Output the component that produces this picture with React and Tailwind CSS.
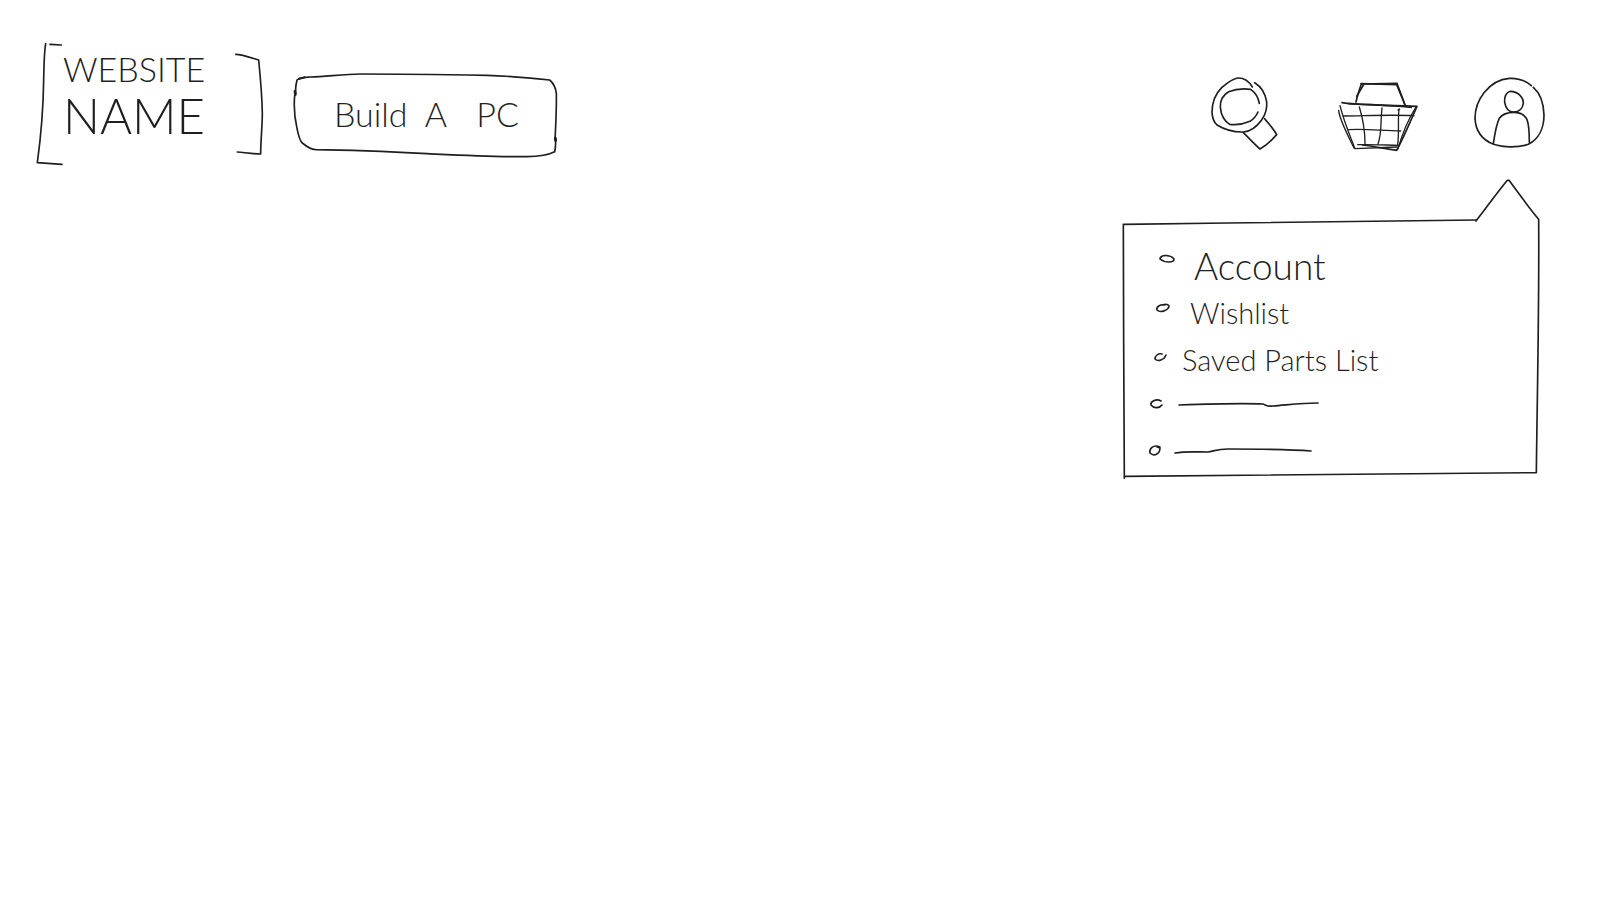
import React from "react";

const INK = "#1f1f1f";

function Sketch({ viewBox, className, stretch = false, children }) {
  return (
    <svg
      viewBox={viewBox}
      className={className}
      preserveAspectRatio={stretch ? "none" : "xMidYMid meet"}
      fill="none"
      stroke={INK}
      strokeWidth="5"
      strokeLinecap="round"
      strokeLinejoin="round"
      aria-hidden="true"
    >
      {children}
    </svg>
  );
}

function Logo() {
  return (
    <a href="#home" className="relative flex h-[125px] w-[230px] shrink-0 flex-col pt-2 pl-7">
      <Sketch viewBox="45 36 690 375" className="absolute inset-0 h-full w-full" stretch>
        <path d="M77 41 C72 70 72 110 71 150 C70 230 64 310 52 398 L126 403 M90 43 L124 45" />
        <path d="M647 73 C665 73 690 82 716 90 C720 130 726 190 727 250 C727 290 722 330 722 372 C700 372 675 368 652 366" />
      </Sketch>
      <span className="text-[34px] leading-[38px]">WEBSITE</span>
      <span className="text-[49px] leading-[54px]">NAME</span>
    </a>
  );
}

function BuildButton() {
  return (
    <button type="button" className="relative mt-[30px] h-[87px] w-[267px] shrink-0 cursor-pointer pb-1 text-[34px]">
      <Sketch viewBox="38 36 801 261" className="absolute inset-0 h-full w-full" stretch>
        <path d="M46 102 C45 88 47 72 50 60 C58 52 75 52 90 51 C140 49 190 43 240 42 C370 42 500 44 620 46 C690 48 750 54 808 60 C820 70 826 84 828 100 C829 150 826 200 824 240" />
        <path d="M44 98 C40 130 42 170 50 205 C54 225 58 242 66 249 C78 259 92 268 106 269 C210 270 330 275 440 281 C550 286 650 291 740 290 C775 289 805 284 823 275 C826 265 826 250 826 235" />
        <path d="M44 94 L45 104 M825 234 L826 242" strokeWidth="8" />
        <path d="M56 56 L74 52" strokeWidth="6" />
      </Sketch>
      <span>Build</span> <span className="mr-5 ml-2">A</span> <span>PC</span>
    </button>
  );
}

function SearchIcon() {
  return (
    <Sketch viewBox="34 27 210 228" className="h-[76px] w-[70px]">
      <path d="M158 66 C148 49 133 38 114 39 C100 41 82 54 66 68 C48 86 37 112 37 142 C38 158 43 172 52 180 C75 194 105 202 132 201 C152 199 172 184 186 165 C198 148 203 130 201 110 C197 86 183 64 165 53" />
      <path d="M179 115 C176 98 166 82 153 73 C130 70 105 73 87 80 C70 90 61 108 62 127 C64 149 74 168 90 178 C112 181 135 176 151 169 C163 162 170 152 175 141" />
      <path d="M131 203 C147 218 164 238 181 252 C199 242 217 225 231 209 C221 191 208 177 195 161" />
    </Sketch>
  );
}

function BasketIcon() {
  return (
    <Sketch viewBox="29 13 249 240" className="h-[80px] w-[83px]">
      <path d="M92 97 C96 78 102 60 108 43 L215 41 C222 62 233 86 240 110" />
      <path d="M94 80 L116 43 M107 42 L214 45 L239 106" />
      <path d="M50 99 C75 104 105 103 135 105 C170 107 210 108 258 113" />
      <path d="M70 102 C130 106 200 108 275 110 C255 155 237 200 214 242 C180 238 150 230 112 226" />
      <path d="M44 108 C52 140 66 180 89 237 L215 232" strokeWidth="4" />
      <path d="M40 122 C42 148 62 186 86 235" strokeWidth="4" />
      <path d="M272 112 C250 146 232 188 217 240" strokeWidth="4" />
      <path d="M54 139 C110 139 190 134 266 138 M70 180 C110 176 170 183 226 184" strokeWidth="4" />
      <path d="M102 112 C112 145 119 185 119 222 M170 115 C165 160 170 190 158 223 M221 118 C217 150 222 190 217 224" strokeWidth="4" />
      <path d="M97 225 C135 224 175 226 222 227 M218 121 L223 119" strokeWidth="4" />
    </Sketch>
  );
}

function UserIcon() {
  return (
    <Sketch viewBox="36 27 225 225" className="h-[75px] w-[75px]">
      <path d="M214 62 C197 47 173 39 148 40 C118 42 92 58 72 83 C54 106 45 132 45 160 C47 198 68 225 101 238 C130 248 175 248 205 238 C237 222 252 188 252 150 C251 116 240 84 220 67" />
      <path d="M150 79 C138 83 132 97 134 112 C137 130 147 141 161 141 C177 141 188 130 190 115 C190 96 175 80 150 79 Z" />
      <path d="M100 236 C104 208 108 180 118 160 C126 148 145 142 163 142 C182 142 194 150 201 164 C208 182 208 208 208 232" />
    </Sketch>
  );
}

const items = [
  {
    label: "Account",
    row: "pl-10 text-[37px]",
    bullet: "M-2 8 C0 4 9 5 12 9 C12 13 3 13 -2 9 C-1 6 3 5 7 6",
  },
  {
    label: "Wishlist",
    row: "pl-9 text-[29px]",
    bullet: "M7 8 C2 7 -2 10 -1 13 C2 16 9 14 11 10 C11 7 8 7 4 8",
  },
  {
    label: "Saved Parts List",
    row: "pl-7 text-[29px]",
    bullet: "M12 10 C8 9 5 12 5 15 C8 18 14 16 16 11",
  },
  {
    name: "Menu item 4",
    row: "pl-7",
    bullet: "M11 10 C6 7 0 11 1 14 C4 18 10 17 12 14",
    line: "M-3 12 C27 11 57 10 81 11 C84 12 85 14 91 13 C105 12 119 10 136 10",
  },
  {
    name: "Menu item 5",
    row: "pl-6",
    bullet: "M14 9 C7 6 3 11 4 15 C8 19 14 16 14 10 L11 9",
    line: "M-3 13 C8 11 18 12 30 12 C36 11 40 9 50 9 C78 9 108 9 133 11",
  },
];

function AccountMenu() {
  return (
    <nav aria-label="Account menu" className="relative w-[419px] pt-16 pb-[3px]">
      <Sketch viewBox="36 24 1257 906" className="absolute inset-0 h-full w-full" stretch>
        <path d="M1099 150 C800 152 400 159 40 163 C40 400 42 700 43 925" />
        <path d="M1098 153 C1130 112 1160 70 1192 31 L1197 31 C1226 70 1256 112 1286 148 C1288 400 1282 650 1279 908 C860 910 450 918 44 919" />
      </Sketch>
      <ul className="relative">
        {items.map((item) => (
          <li key={item.label ?? item.name} className={item.row}>
            <a href="#menu" aria-label={item.label ? undefined : item.name} className="flex h-[47px] items-center">
              <Sketch viewBox="0 0 32 32" className="h-8 w-8 shrink-0 overflow-visible [stroke-width:1.6]">
                <path d={item.bullet} />
              </Sketch>
              {item.label}
              {item.line && (
                <Sketch viewBox="0 0 140 28" className="h-7 w-[140px] overflow-visible [stroke-width:1.7]">
                  <path d={item.line} />
                </Sketch>
              )}
            </a>
          </li>
        ))}
      </ul>
    </nav>
  );
}

export default function App() {
  return (
    <div className="min-h-screen bg-white pt-[42px] font-['Lato',sans-serif] font-light text-[#1f1f1f]">
      <header className="flex items-start justify-between pr-[53px] pl-[35px]">
        <div className="flex items-start gap-7">
          <Logo />
          <BuildButton />
        </div>
        <div className="mt-8 flex items-start gap-[54px]">
          <button type="button" aria-label="Search" className="cursor-pointer">
            <SearchIcon />
          </button>
          <button type="button" aria-label="Basket" className="cursor-pointer">
            <BasketIcon />
          </button>
          <button type="button" aria-label="Account" aria-expanded="true" className="cursor-pointer">
            <UserIcon />
          </button>
        </div>
      </header>
      <div className="mt-[11px] flex justify-end pr-[59px]">
        <AccountMenu />
      </div>
    </div>
  );
}
